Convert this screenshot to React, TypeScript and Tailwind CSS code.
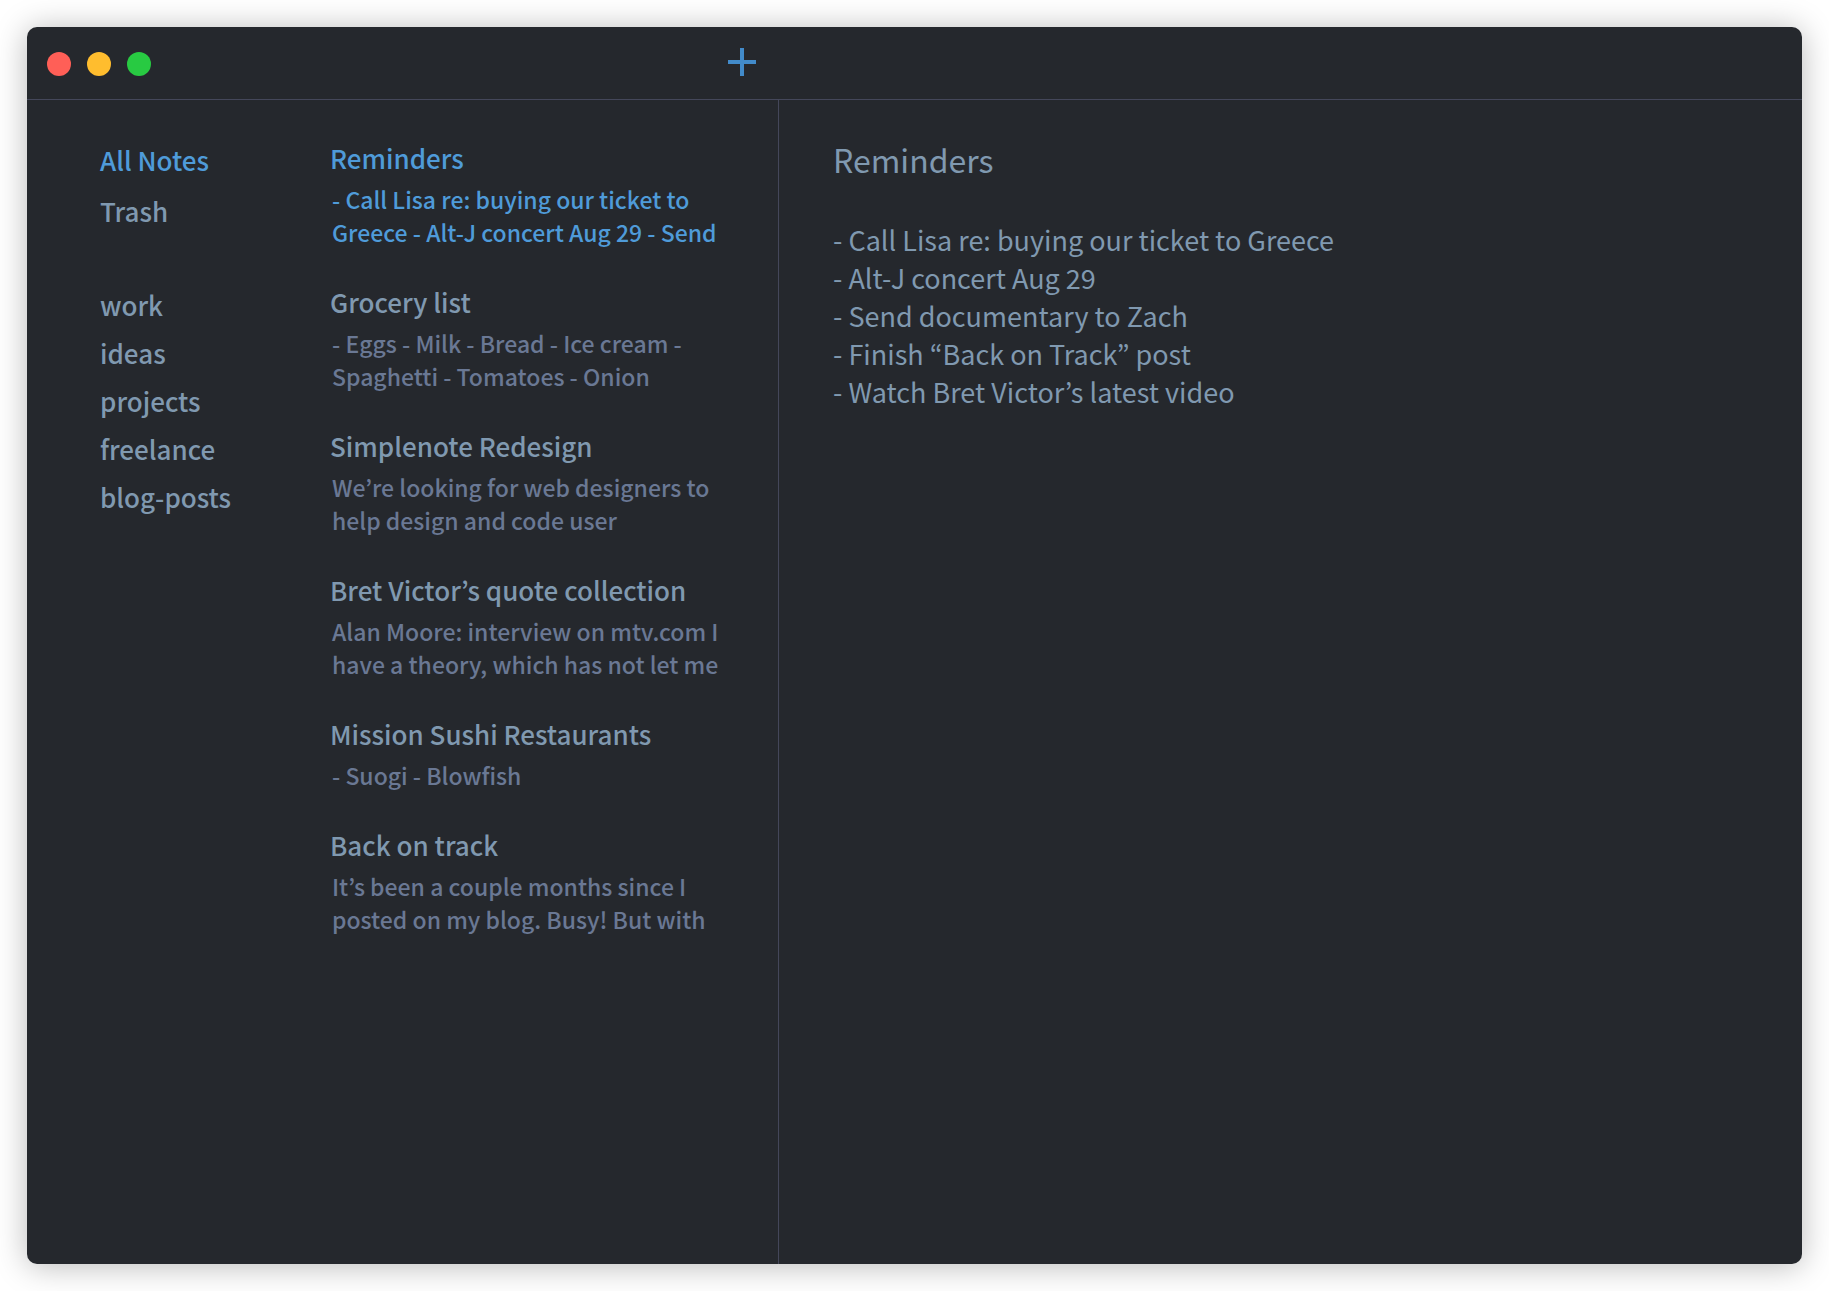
import { useState } from 'react';

const folders = ['All Notes', 'Trash'];
const tags = ['work', 'ideas', 'projects', 'freelance', 'blog-posts'];

const notes = [
  { title: 'Reminders', preview: '- Call Lisa re: buying our ticket to Greece - Alt-J concert Aug 29 - Send' },
  { title: 'Grocery list', preview: '- Eggs - Milk - Bread - Ice cream - Spaghetti - Tomatoes - Onion' },
  { title: 'Simplenote Redesign', preview: 'We’re looking for web designers to help design and code user' },
  { title: 'Bret Victor’s quote collection', preview: 'Alan Moore: interview on mtv.com I have a theory, which has not let me' },
  { title: 'Mission Sushi Restaurants', preview: '- Suogi - Blowfish' },
  { title: 'Back on track', preview: 'It’s been a couple months since I posted on my blog. Busy! But with' },
];

const lines = [
  '- Call Lisa re: buying our ticket to Greece',
  '- Alt-J concert Aug 29',
  '- Send documentary to Zach',
  '- Finish “Back on Track” post',
  '- Watch Bret Victor’s latest video',
];

export default function App() {
  const [folder, setFolder] = useState('All Notes');
  const [selected, setSelected] = useState(0);

  return (
    <div className="flex min-h-screen bg-white p-[27px] font-['Noto_Sans_CJK_KR','Noto_Sans',sans-serif] text-[#8099b0]">
      <div className="flex grow flex-col overflow-hidden rounded-[10px] bg-[#25282d] shadow-[0_2px_32px_rgba(0,0,0,0.28)]">
        <header className="flex h-[73px] shrink-0 border-b border-[#44475a]">
          <div className="flex w-[751px] shrink-0 items-start justify-between pl-5 pr-[22px]">
            <div className="flex gap-4 pt-[25px]">
              <button aria-label="Close" className="size-6 rounded-full bg-[#ff5f57]" />
              <button aria-label="Minimize" className="size-6 rounded-full bg-[#ffbd2e]" />
              <button aria-label="Zoom" className="size-6 rounded-full bg-[#28ca42]" />
            </div>
            <button aria-label="New note" className="mt-[21px] text-[#428bca]">
              <svg viewBox="0 0 28 28" className="size-7" fill="currentColor" aria-hidden="true">
                <path d="M12 0h4v12h12v4H16v12h-4V16H0v-4h12z" />
              </svg>
            </button>
          </div>
        </header>

        <div className="flex grow">
          <nav className="w-[303px] shrink-0 pl-[73px] pt-[34px]">
            <ul>
              {folders.map((name) => (
                <li key={name}>
                  <button
                    onClick={() => setFolder(name)}
                    className={`block text-[26px] leading-[51px] font-medium ${name === folder ? 'text-[#4f9bd9]' : ''}`}
                  >
                    {name}
                  </button>
                </li>
              ))}
            </ul>
            <ul className="mt-[45px]">
              {tags.map((tag) => (
                <li key={tag}>
                  <button
                    onClick={() => setFolder(tag)}
                    className={`block text-[26px] leading-[48px] font-medium ${tag === folder ? 'text-[#4f9bd9]' : ''}`}
                  >
                    {tag}
                  </button>
                </li>
              ))}
            </ul>
          </nav>

          <ul className="flex w-[448px] shrink-0 flex-col gap-[30px] pr-12 pt-[35px]">
            {notes.map((note, i) => (
              <li key={note.title}>
                <button
                  onClick={() => setSelected(i)}
                  className={`block w-full text-left font-medium ${i === selected ? 'text-[#4f9bd9]' : ''}`}
                >
                  <span className="block text-[26px] leading-[46px]">{note.title}</span>
                  <span className={`block pl-0.5 pt-0.5 text-[23px] leading-[33px] ${i === selected ? '' : 'text-[#6a7894]'}`}>
                    {note.preview}
                  </span>
                </button>
              </li>
            ))}
          </ul>

          <main className="min-w-0 grow border-l border-[#44475a] pl-[54px] pt-9">
            <h1 className="text-[32px] leading-[46px]">Reminders</h1>
            <div className="mt-[39px] text-[27px] leading-[38px]">
              {lines.map((line) => (
                <p key={line}>{line}</p>
              ))}
            </div>
          </main>
        </div>
      </div>
    </div>
  );
}
